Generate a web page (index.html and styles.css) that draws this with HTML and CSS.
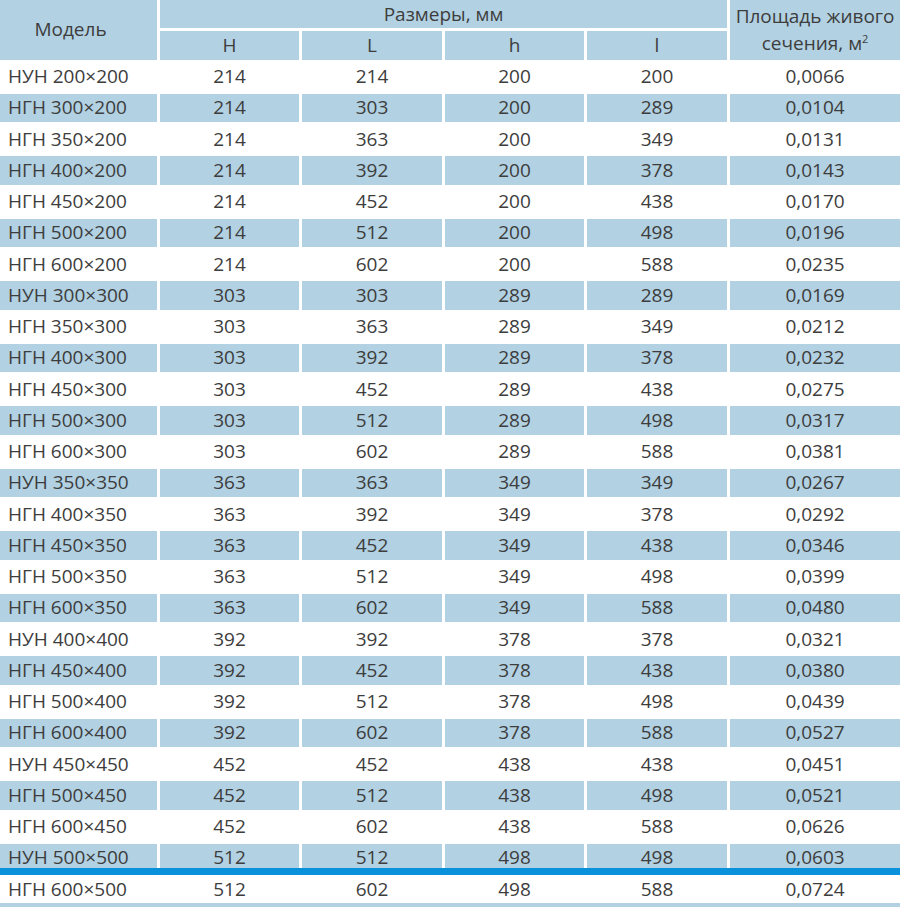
FILE: index.html
```html
<!DOCTYPE html>
<html lang="ru">
<head>
<meta charset="utf-8">
<title>Размеры решёток</title>
<link rel="stylesheet" href="styles.css">
</head>
<body>
<div class="sheet">
  <table class="grid main">
    <colgroup>
      <col class="c-model"><col class="c-dim"><col class="c-dim2"><col class="c-dim"><col class="c-dim2"><col class="c-area">
    </colgroup>
    <thead>
      <tr>
        <th rowspan="2" class="model">Модель</th>
        <th colspan="4">Размеры, мм</th>
        <th rowspan="2" class="area">Площадь живого<br>сечения, м<sup>2</sup></th>
      </tr>
      <tr><th>H</th><th>L</th><th>h</th><th>l</th></tr>
    </thead>
    <tbody>
      <tr><td class="model">НУН 200×200</td><td>214</td><td>214</td><td>200</td><td>200</td><td>0,0066</td></tr>
      <tr><td class="model">НГН 300×200</td><td>214</td><td>303</td><td>200</td><td>289</td><td>0,0104</td></tr>
      <tr><td class="model">НГН 350×200</td><td>214</td><td>363</td><td>200</td><td>349</td><td>0,0131</td></tr>
      <tr><td class="model">НГН 400×200</td><td>214</td><td>392</td><td>200</td><td>378</td><td>0,0143</td></tr>
      <tr><td class="model">НГН 450×200</td><td>214</td><td>452</td><td>200</td><td>438</td><td>0,0170</td></tr>
      <tr><td class="model">НГН 500×200</td><td>214</td><td>512</td><td>200</td><td>498</td><td>0,0196</td></tr>
      <tr><td class="model">НГН 600×200</td><td>214</td><td>602</td><td>200</td><td>588</td><td>0,0235</td></tr>
      <tr><td class="model">НУН 300×300</td><td>303</td><td>303</td><td>289</td><td>289</td><td>0,0169</td></tr>
      <tr><td class="model">НГН 350×300</td><td>303</td><td>363</td><td>289</td><td>349</td><td>0,0212</td></tr>
      <tr><td class="model">НГН 400×300</td><td>303</td><td>392</td><td>289</td><td>378</td><td>0,0232</td></tr>
      <tr><td class="model">НГН 450×300</td><td>303</td><td>452</td><td>289</td><td>438</td><td>0,0275</td></tr>
      <tr><td class="model">НГН 500×300</td><td>303</td><td>512</td><td>289</td><td>498</td><td>0,0317</td></tr>
      <tr><td class="model">НГН 600×300</td><td>303</td><td>602</td><td>289</td><td>588</td><td>0,0381</td></tr>
      <tr><td class="model">НУН 350×350</td><td>363</td><td>363</td><td>349</td><td>349</td><td>0,0267</td></tr>
      <tr><td class="model">НГН 400×350</td><td>363</td><td>392</td><td>349</td><td>378</td><td>0,0292</td></tr>
      <tr><td class="model">НГН 450×350</td><td>363</td><td>452</td><td>349</td><td>438</td><td>0,0346</td></tr>
      <tr><td class="model">НГН 500×350</td><td>363</td><td>512</td><td>349</td><td>498</td><td>0,0399</td></tr>
      <tr><td class="model">НГН 600×350</td><td>363</td><td>602</td><td>349</td><td>588</td><td>0,0480</td></tr>
      <tr><td class="model">НУН 400×400</td><td>392</td><td>392</td><td>378</td><td>378</td><td>0,0321</td></tr>
      <tr><td class="model">НГН 450×400</td><td>392</td><td>452</td><td>378</td><td>438</td><td>0,0380</td></tr>
      <tr><td class="model">НГН 500×400</td><td>392</td><td>512</td><td>378</td><td>498</td><td>0,0439</td></tr>
      <tr><td class="model">НГН 600×400</td><td>392</td><td>602</td><td>378</td><td>588</td><td>0,0527</td></tr>
      <tr><td class="model">НУН 450×450</td><td>452</td><td>452</td><td>438</td><td>438</td><td>0,0451</td></tr>
      <tr><td class="model">НГН 500×450</td><td>452</td><td>512</td><td>438</td><td>498</td><td>0,0521</td></tr>
      <tr><td class="model">НГН 600×450</td><td>452</td><td>602</td><td>438</td><td>588</td><td>0,0626</td></tr>
      <tr><td class="model">НУН 500×500</td><td>512</td><td>512</td><td>498</td><td>498</td><td>0,0603</td></tr>
    </tbody>
  </table>
  <div class="rule"></div>
  <table class="grid tail">
    <colgroup>
      <col class="c-model"><col class="c-dim"><col class="c-dim2"><col class="c-dim"><col class="c-dim2"><col class="c-area">
    </colgroup>
    <tbody>
      <tr><td class="model">НГН 600×500</td><td>512</td><td>602</td><td>498</td><td>588</td><td>0,0724</td></tr>
    </tbody>
  </table>
  <div class="rule-light"></div>
</div>
</body>
</html>
```

FILE: styles.css
```css
html, body {
  margin: 0;
  padding: 0;
  background: #ffffff;
}

.sheet {
  width: 900px;
  overflow: hidden;
  font-family: "Open Sans", "Noto Sans", "Liberation Sans", sans-serif;
  font-size: 19px;
  font-weight: 400;
  color: #3d3d3d;
}

.grid {
  table-layout: fixed;
  width: 906px;
  border-collapse: separate;
  border-spacing: 3px;
  margin: -3px 0 -3px -3px;
}

.c-model { width: 157px; }
.c-dim { width: 139px; }
.c-dim2 { width: 140px; }
.c-area { width: 170px; }

.grid th,
.grid td {
  height: 28.25px;
  padding: 0;
  line-height: 27px;
  font-weight: 400;
  text-align: center;
  vertical-align: middle;
  white-space: nowrap;
}

.grid th {
  background: #b2d1e2;
}

.grid th.model {
  padding-right: 16px;
}

.grid tbody tr:nth-child(even) td {
  background: #b2d1e2;
}

.grid td.model {
  text-align: left;
  text-indent: 8px;
}

.grid th.area sup {
  font-size: 11px;
  line-height: 0;
  vertical-align: 7px;
}

.rule {
  height: 7px;
  margin-top: -7px;
  background: #0a91dc;
}

.rule-light {
  height: 4px;
  background: #b2d1e2;
}
```
